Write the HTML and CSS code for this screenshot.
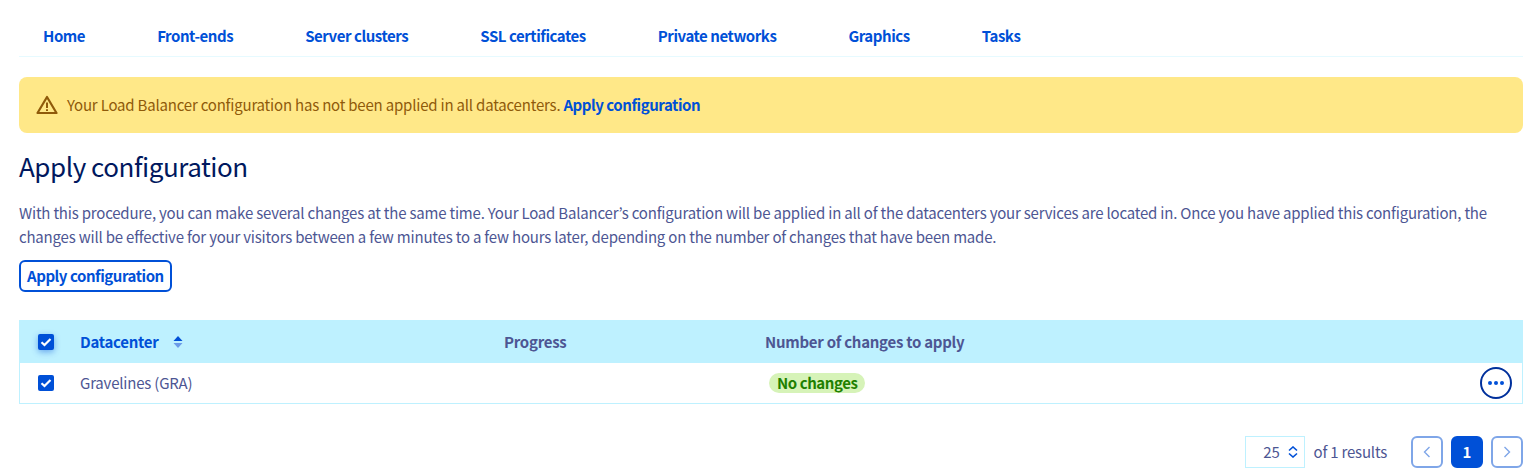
FILE: index.html
```html
<!DOCTYPE html>
<html lang="en">

<head>
   <meta charset="UTF-8">
   <meta name="viewport" content="width=device-width, initial-scale=1.0">
   <title>Apply configuration</title>
   <link rel="stylesheet" href="styles.css">
</head>

<body>
   <main>
      <nav class="tabs">
         <a class="tab" href="#">Home</a>
         <a class="tab" href="#">Front-ends</a>
         <a class="tab" href="#">Server clusters</a>
         <a class="tab" href="#">SSL certificates</a>
         <a class="tab" href="#">Private networks</a>
         <a class="tab" href="#">Graphics</a>
         <a class="tab" href="#">Tasks</a>
      </nav>

      <div class="alert">
         <svg class="alert-icon" width="22" height="20" viewBox="0 0 22 20" fill="none" stroke="#8f5a0a" stroke-width="2.2" stroke-linejoin="round">
            <path d="M11 2 L20.5 18 L1.5 18 Z"/>
            <path d="M11 7.5 V13" stroke-width="2"/>
            <path d="M11 14.2 V16" stroke-width="2"/>
         </svg>
         <span>Your Load Balancer configuration has not been applied in all datacenters.</span>
         <a class="link" href="#">Apply configuration</a>
      </div>

      <h1>Apply configuration</h1>
      <p class="intro">With this procedure, you can make several changes at the same time. Your Load Balancer’s configuration will be applied in all of the datacenters your services are located in. Once you have applied this configuration, the changes will be effective for your visitors between a few minutes to a few hours later, depending on the number of changes that have been made.</p>
      <button class="btn">Apply configuration</button>

      <div class="table">
         <div class="row head">
            <span class="check shadow"><svg width="12" height="10" viewBox="0 0 12 10" fill="none" stroke="#fff" stroke-width="2.2"><path d="M1.5 5.2 L4.5 8 L10.5 2"/></svg></span>
            <span class="col-name sort">Datacenter
               <svg width="10" height="12" viewBox="0 0 10 12"><path d="M5 0 L9.5 5 H0.5 Z" fill="#0050d7"/><path d="M5 12 L9.5 7 H0.5 Z" fill="#6b9be8"/></svg>
            </span>
            <span class="col-progress">Progress</span>
            <span class="col-changes">Number of changes to apply</span>
         </div>
         <div class="row body">
            <span class="check"><svg width="12" height="10" viewBox="0 0 12 10" fill="none" stroke="#fff" stroke-width="2.2"><path d="M1.5 5.2 L4.5 8 L10.5 2"/></svg></span>
            <span class="col-name">Gravelines (GRA)</span>
            <span class="col-progress"></span>
            <span class="col-changes"><span class="badge">No changes</span></span>
            <button class="more"><svg width="16" height="4" viewBox="0 0 16 4" fill="#0050d7"><circle cx="2" cy="2" r="2"/><circle cx="8" cy="2" r="2"/><circle cx="14" cy="2" r="2"/></svg></button>
         </div>
      </div>

      <div class="pager">
         <div class="size">
            <span>25</span>
            <svg width="10" height="12" viewBox="0 0 10 12" fill="none" stroke="#0050d7" stroke-width="1.6"><path d="M1 4.5 L5 1 L9 4.5"/><path d="M1 7.5 L5 11 L9 7.5"/></svg>
         </div>
         <span class="count">of 1 results</span>
         <div class="pages">
            <button class="page"><svg width="8" height="12" viewBox="0 0 8 12" fill="none" stroke="#7fa6e8" stroke-width="1.4"><path d="M6.5 1 L1.5 6 L6.5 11"/></svg></button>
            <button class="page active">1</button>
            <button class="page"><svg width="8" height="12" viewBox="0 0 8 12" fill="none" stroke="#7fa6e8" stroke-width="1.4"><path d="M1.5 1 L6.5 6 L1.5 11"/></svg></button>
         </div>
      </div>
   </main>
</body>

</html>
```

FILE: styles.css
```css
* {
   padding: 0;
   margin: 0;
   box-sizing: border-box;
}

body {
   background: #fff;
   color: #4d5693;
   font-family: "Noto Sans CJK JP", "Noto Sans", sans-serif;
   font-size: 15px;
   letter-spacing: -0.2px;
   line-height: 24px;
}

main {
   padding: 16px 12px 0 19px;
}

.tabs {
   display: flex;
   gap: 72px;
   height: 41px;
   padding: 8px 0 0 24px;
   border-bottom: 1px solid #e6faff;
}

.tab,
.link {
   color: #0050d7;
   font-weight: 700;
   letter-spacing: -0.45px;
   text-decoration: none;
}

.alert {
   display: flex;
   align-items: center;
   height: 56px;
   margin-top: 20px;
   padding: 0 17px;
   background: #ffe888;
   border-radius: 8px;
   color: #8f5a0a;
}

.alert-icon {
   margin-right: 9px;
}

.link {
   margin-left: 3px;
}

h1 {
   margin-top: 15px;
   color: #00185e;
   font-size: 26px;
   font-weight: 400;
   letter-spacing: -0.45px;
   line-height: 36px;
}

.intro {
   margin-top: 17px;
}

.btn {
   display: block;
   height: 32px;
   margin-top: 11px;
   padding: 0 6px;
   background: #fff;
   border: 2px solid #0050d7;
   border-radius: 6px;
   color: #0050d7;
   font: 700 15px/24px "Noto Sans CJK JP", "Noto Sans", sans-serif;
   letter-spacing: -0.45px;
}

.table {
   margin-top: 28px;
   border: 1px solid #bef1ff;
   border-top: 0;
}

.row {
   display: grid;
   grid-template-columns: 60px 425px 260px 1fr;
   align-items: center;
}

.head {
   height: 43px;
   margin: 0 -1px;
   background: #bef1ff;
   font-weight: 700;
   letter-spacing: -0.27px;
   padding-left: 1px;
}

.body {
   height: 40px;
}

.check {
   display: flex;
   align-items: center;
   justify-content: center;
   width: 16px;
   height: 16px;
   margin-left: 18px;
   background: #0050d7;
   border-radius: 2px;
}

.shadow {
   box-shadow: 0 2px 6px rgba(0, 80, 215, 0.45);
}

.sort {
   display: flex;
   align-items: center;
   gap: 14px;
   color: #0050d7;
}

.col-progress {
   margin-left: -1px;
}

.col-changes {
   display: flex;
}

.body .col-changes {
   padding-left: 4px;
}

.badge {
   height: 20px;
   padding: 0 8px;
   background: #d6f3b8;
   border-radius: 10px;
   color: #1f8000;
   font-weight: 700;
   letter-spacing: -0.44px;
   line-height: 20px;
}

.more {
   position: absolute;
   right: 23px;
   top: 367px;
   display: flex;
   align-items: center;
   justify-content: center;
   width: 32px;
   height: 32px;
   background: #fff;
   border: 2px solid #00309c;
   border-radius: 50%;
}

.pager {
   display: flex;
   align-items: center;
   justify-content: flex-end;
   margin-top: 32px;
}

.size {
   display: flex;
   align-items: center;
   justify-content: flex-end;
   gap: 8px;
   width: 60px;
   height: 32px;
   padding-right: 6px;
   border: 1px solid #bef1ff;
}

.count {
   margin-left: 9px;
}

.pages {
   display: flex;
   gap: 8px;
   margin-left: 24px;
}

.page {
   display: flex;
   align-items: center;
   justify-content: center;
   width: 32px;
   height: 32px;
   background: #fff;
   border: 2px solid #7fa6e8;
   border-radius: 6px;
}

.active {
   background: #0050d7;
   border-color: #0050d7;
   color: #fff;
   font: 700 15px/24px "Noto Sans CJK JP", "Noto Sans", sans-serif;
}
```
